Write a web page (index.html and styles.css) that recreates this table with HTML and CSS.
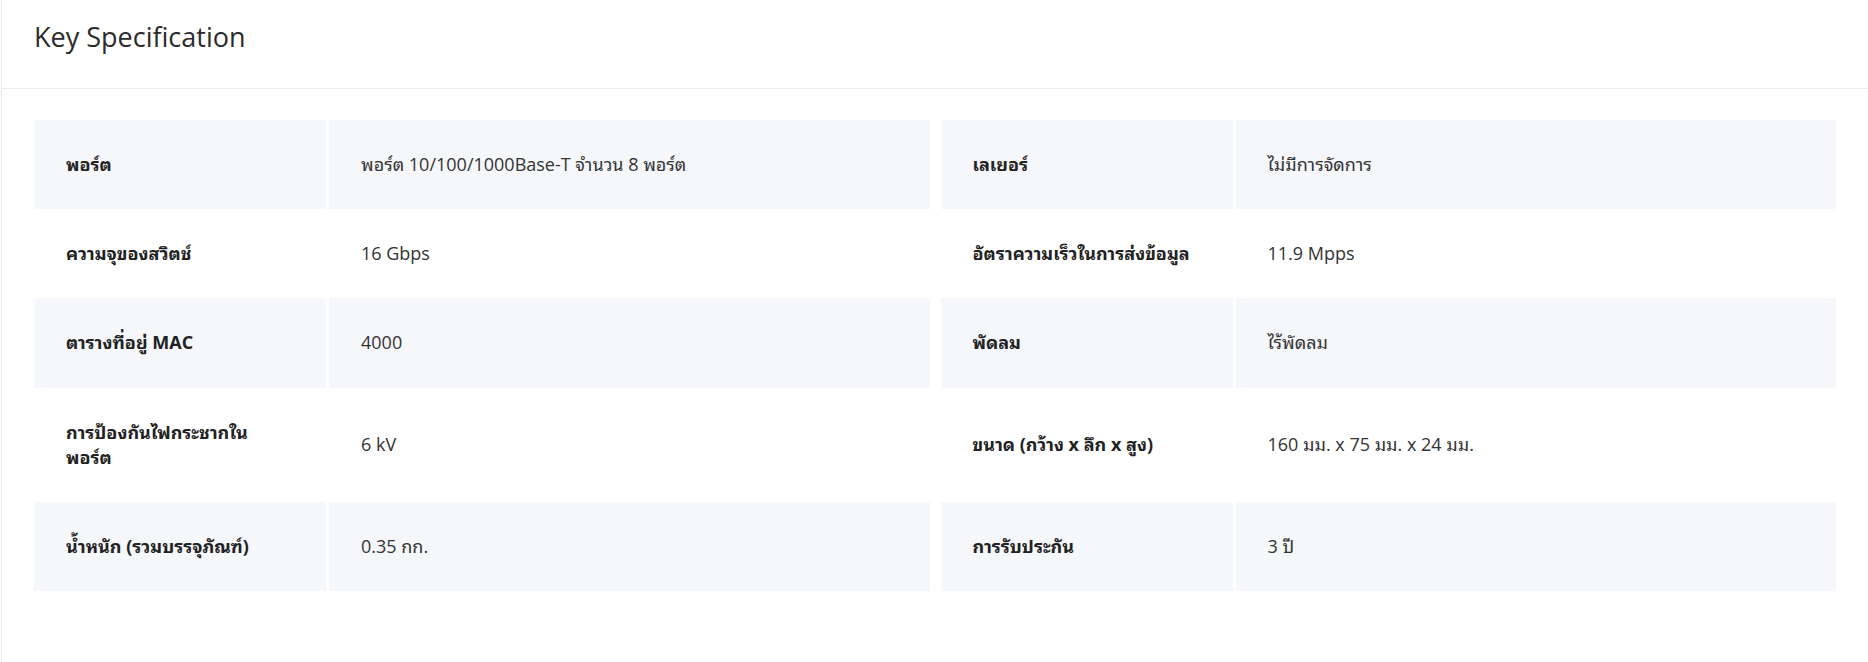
FILE: index.html
```html
<!DOCTYPE html>
<html lang="th">
<head>
<meta charset="utf-8">
<title>Key Specification</title>
<link rel="stylesheet" href="styles.css">
</head>
<body>
<section class="card">
  <header class="card-head">
    <h2 class="card-title">Key Specification</h2>
  </header>
  <div class="card-body">
    <div class="spec-table">
      <div class="spec-row shaded">
        <div class="spec-pair">
          <div class="spec-label">พอร์ต</div>
          <div class="spec-value">พอร์ต 10/100/1000Base-T จำนวน 8 พอร์ต</div>
        </div>
        <div class="spec-pair">
          <div class="spec-label">เลเยอร์</div>
          <div class="spec-value">ไม่มีการจัดการ</div>
        </div>
      </div>
      <div class="spec-row">
        <div class="spec-pair">
          <div class="spec-label">ความจุของสวิตช์</div>
          <div class="spec-value">16 Gbps</div>
        </div>
        <div class="spec-pair">
          <div class="spec-label">อัตราความเร็วในการส่งข้อมูล</div>
          <div class="spec-value">11.9 Mpps</div>
        </div>
      </div>
      <div class="spec-row shaded">
        <div class="spec-pair">
          <div class="spec-label">ตารางที่อยู่ MAC</div>
          <div class="spec-value">4000</div>
        </div>
        <div class="spec-pair">
          <div class="spec-label">พัดลม</div>
          <div class="spec-value">ไร้พัดลม</div>
        </div>
      </div>
      <div class="spec-row">
        <div class="spec-pair">
          <div class="spec-label">การป้องกันไฟกระชากใน พอร์ต</div>
          <div class="spec-value">6 kV</div>
        </div>
        <div class="spec-pair">
          <div class="spec-label">ขนาด (กว้าง x ลึก x สูง)</div>
          <div class="spec-value">160 มม. x 75 มม. x 24 มม.</div>
        </div>
      </div>
      <div class="spec-row shaded">
        <div class="spec-pair">
          <div class="spec-label">น้ำหนัก (รวมบรรจุภัณฑ์)</div>
          <div class="spec-value">0.35 กก.</div>
        </div>
        <div class="spec-pair">
          <div class="spec-label">การรับประกัน</div>
          <div class="spec-value">3 ปี</div>
        </div>
      </div>
    </div>
  </div>
</section>
</body>
</html>
```

FILE: styles.css
```css
html, body {
  margin: 0;
  padding: 0;
  background: #ffffff;
}

body {
  font-family: "Open Sans", "Noto Sans Thai Looped", "Waree", "Tahoma", "Loma", "Noto Sans", "Noto Sans Thai", sans-serif;
  color: #333333;
}

.card {
  margin-left: 1px;
  border-left: 1px solid #e8e8e8;
  min-height: 662px;
  box-sizing: border-box;
}

.card-head {
  padding: 19px 32px 33px;
  border-bottom: 1px solid #ebebeb;
}

.card-title {
  margin: 0;
  font-size: 27px;
  line-height: 36px;
  font-weight: 400;
  color: #2b2b2b;
}

.card-body {
  padding: 31px 32px 40px;
}

.spec-table {
  display: flex;
  flex-direction: column;
}

.spec-row {
  display: grid;
  grid-template-columns: 1fr 1fr;
  column-gap: 11px;
}

.spec-pair {
  display: grid;
  grid-template-columns: 292px 1fr;
  column-gap: 3px;
}

.spec-label,
.spec-value {
  display: flex;
  align-items: center;
  padding: 32px;
  font-size: 18px;
  line-height: 1.4;
}

.spec-label {
  padding-right: 40px;
  font-weight: 700;
  color: #222222;
}

.spec-value {
  font-weight: 400;
  color: #333333;
}

.shaded .spec-label,
.shaded .spec-value {
  background: #f6f7fb;
}
```
